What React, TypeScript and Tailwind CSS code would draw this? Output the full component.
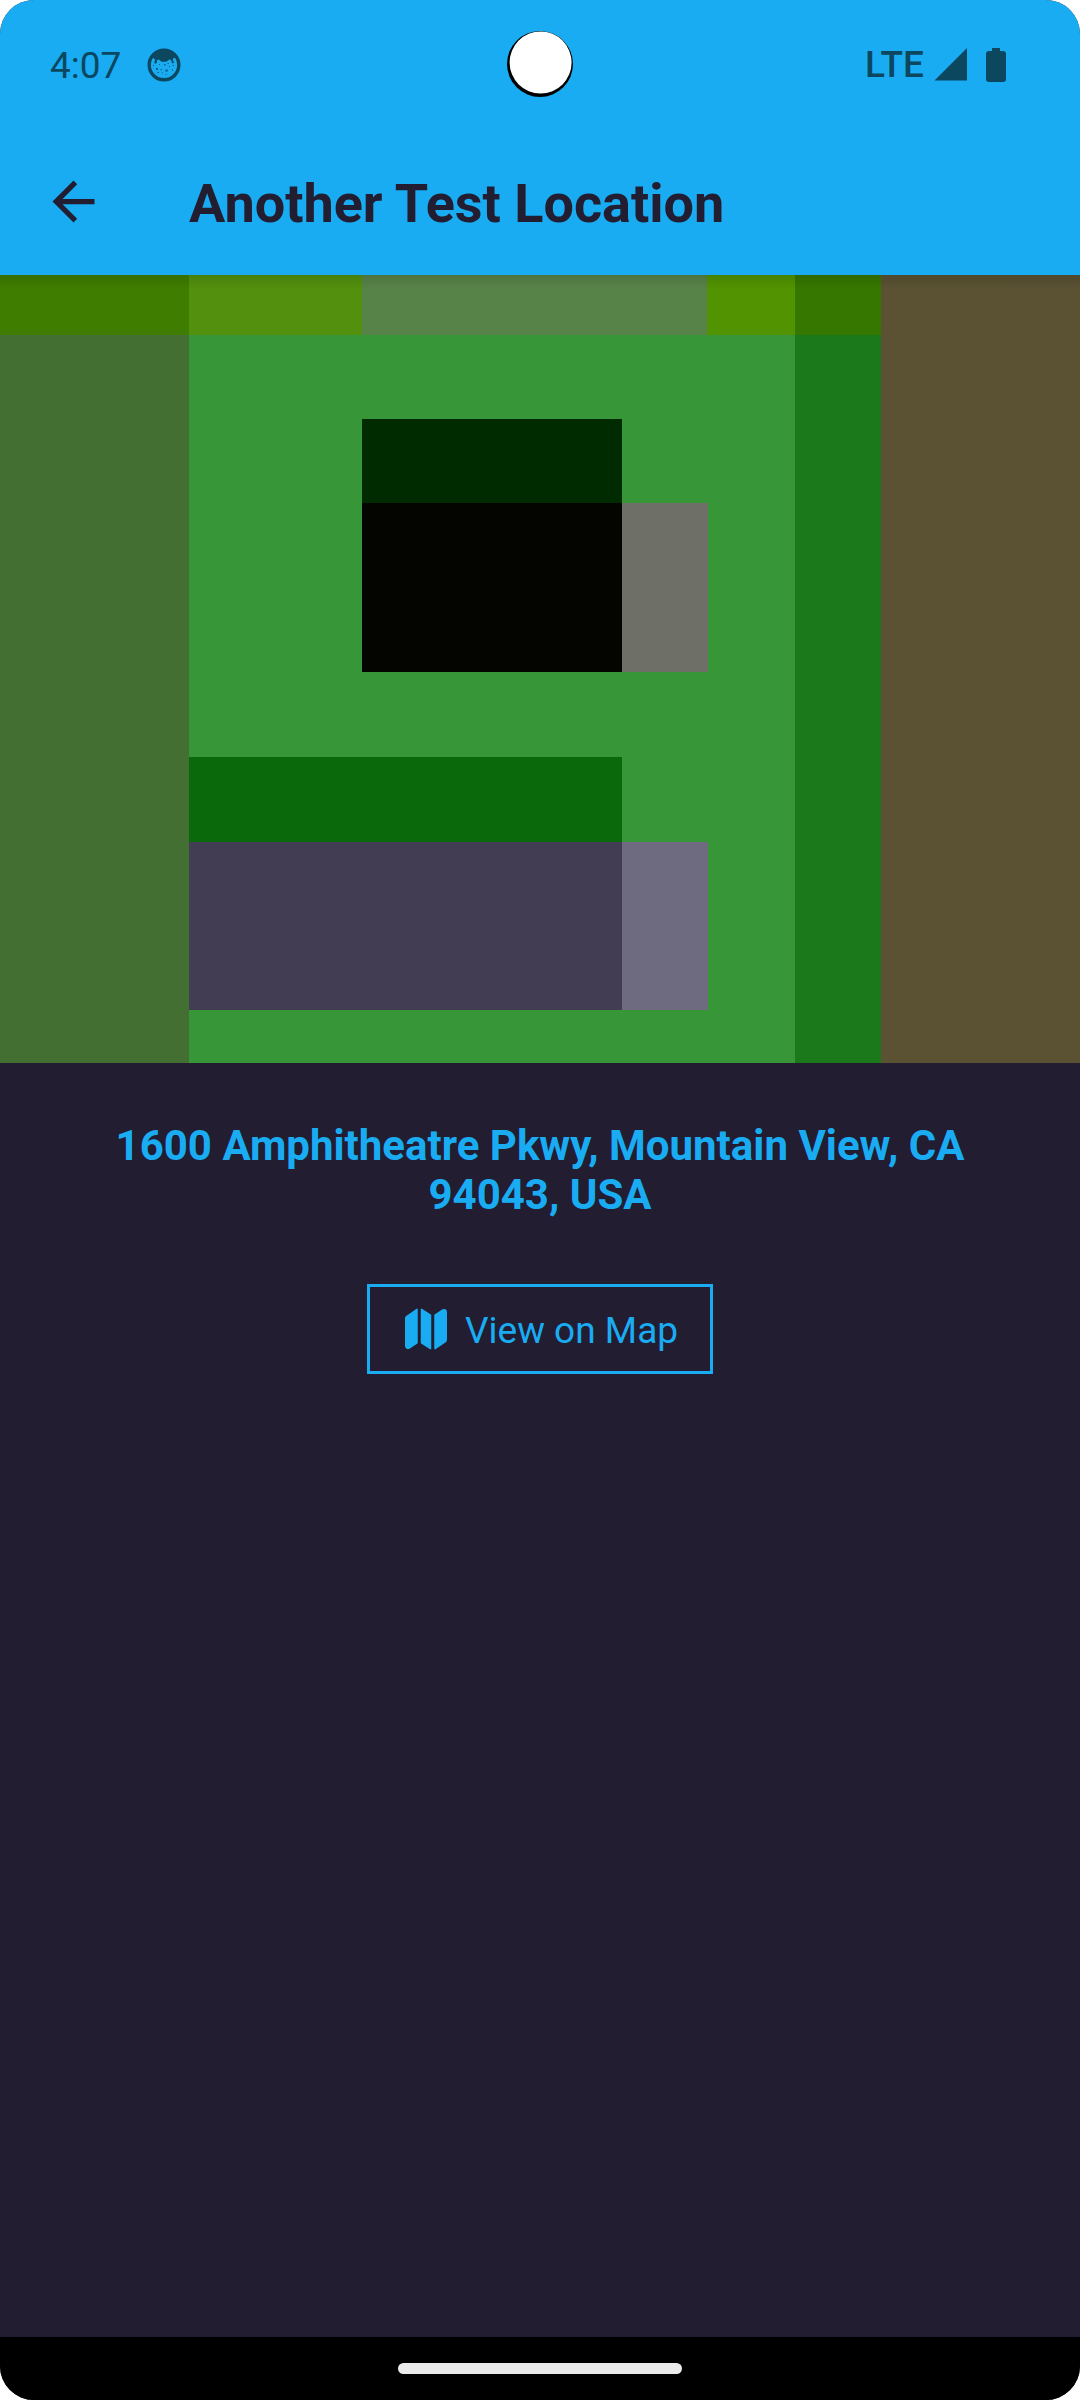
import React from 'react';
import { MdArrowBack } from 'react-icons/md';
import { IoMap } from 'react-icons/io5';

function CatIcon() {
  return (
    <svg viewBox="0 0 34 34" className="h-[34px] w-[34px]" aria-hidden="true">
      <circle cx="17" cy="17" r="14.8" fill="none" stroke="currentColor" strokeWidth="3.4" />
      <path
        fill="currentColor"
        d="M4.500 9C7 4.600 12 1.500 17 1.500s10 3.100 12.500 7.500L26 10.500l-.2 1.300 1.300 3-1.900.6-1.200-3.400-1.500-.5-2.500 1.800C18.500 14 15.500 14 14 13.300l-2.500-1.800-1.500.5-.2 3-1.900.8-.6-1.800 1-2.600Z"
      />
      <g fill="currentColor" opacity="0.75">
        <rect x="9" y="20" width="2" height="2" />
        <rect x="18.500" y="21.500" width="2.200" height="2.200" />
        <rect x="17" y="16" width="1.500" height="1.500" />
        <rect x="12" y="16" width="1" height="1" />
        <rect x="13.500" y="21" width="1.300" height="1.300" />
        <rect x="20.500" y="15" width="1.500" height="1" />
        <rect x="25.500" y="17" width="1.500" height="1" />
        <rect x="25" y="21" width="1" height="1.500" />
        <rect x="22" y="18" width="1" height="1" />
        <rect x="15" y="24.500" width="1" height="1" />
        <rect x="10.500" y="24" width="1.500" height="1" />
        <rect x="18.500" y="26" width="1" height="1" />
        <rect x="6" y="17" width="1" height="1" />
      </g>
    </svg>
  );
}

function StatusBar() {
  return (
    <div className="relative flex h-32 items-start justify-between pt-11 pr-[73px] pl-[50px] text-[#0b475f]">
      <div className="flex h-[42px] items-center gap-[26px]">
        <span className="pt-0.5 text-[37px] leading-[42px]">4:07</span>
        <CatIcon />
      </div>
      <svg viewBox="0 0 66 66" className="absolute top-[31px] left-1/2 h-[66px] w-[66px] -translate-x-1/2" aria-hidden="true">
        <circle cx="33" cy="33" r="33" fill="#000" />
        <circle cx="33.600" cy="31.500" r="31" fill="#fff" />
      </svg>
      <div className="flex h-[42px] items-center">
        <span className="text-[37px] leading-[42px] font-medium">LTE</span>
        <svg viewBox="0 0 34 34" className="ml-2.5 h-[34px] w-[34px]" aria-hidden="true">
          <path d="M0.500 32.500 33 0V32.500Z" fill="currentColor" />
        </svg>
        <svg viewBox="0 0 22 34" className="ml-[17px] h-[34px] w-[22px]" aria-hidden="true">
          <path d="M7 0h8v3h3q3 0 3 3v25q0 3-3 3H4q-3 0-3-3V6q0-3 3-3h3Z" fill="currentColor" />
        </svg>
      </div>
    </div>
  );
}

const tiles: [number, number, number, number, string][] = [
  [0, 0, 189, 60, '#3f7d00'],
  [189, 0, 173, 60, '#52900d'],
  [362, 0, 345, 60, '#588348'],
  [707, 0, 88, 60, '#519300'],
  [795, 0, 86, 60, '#367700'],
  [0, 60, 189, 728, '#436f32'],
  [189, 60, 606, 728, '#379637'],
  [795, 60, 86, 728, '#1b791b'],
  [881, 0, 199, 788, '#5a5233'],
  [362, 144, 260, 84, '#002b00'],
  [362, 228, 260, 169, '#050500'],
  [622, 228, 86, 169, '#6e6f67'],
  [189, 482, 433, 85, '#0a690a'],
  [189, 567, 433, 168, '#433d54'],
  [622, 567, 86, 168, '#6e6a80'],
];

function PlacePhoto() {
  return (
    <svg
      viewBox="0 0 1080 788"
      preserveAspectRatio="none"
      shapeRendering="crispEdges"
      className="block h-[788px] w-full"
      role="img"
      aria-label="Another Test Location"
    >
      <defs>
        <linearGradient id="shade" x1="0" y1="0" x2="0" y2="1">
          <stop offset="0" stopColor="#000" stopOpacity="0.12" />
          <stop offset="1" stopColor="#000" stopOpacity="0" />
        </linearGradient>
      </defs>
      {tiles.map(([x, y, w, h, fill]) => (
        <rect key={`${x}-${y}`} x={x} y={y} width={w} height={h} fill={fill} />
      ))}
      <rect width="1080" height="14" fill="url(#shade)" />
    </svg>
  );
}

export default function App() {
  return (
    <div className="min-h-screen bg-white font-['Roboto',sans-serif]">
      <div className="flex min-h-screen flex-col overflow-hidden rounded-[34px] bg-[#221d30]">
        <header className="bg-[#1aacf2]">
          <StatusBar />
          <div className="flex h-[147px] items-center pl-[42px] text-[#221d30]">
            <button type="button" aria-label="Go back" className="mr-21">
              <MdArrowBack className="h-[63px] w-[63px]" />
            </button>
            <h1 className="pt-1 text-[54px] leading-[62px] font-bold">Another Test Location</h1>
          </div>
        </header>
        <main className="flex flex-1 flex-col items-center">
          <PlacePhoto />
          <p className="mx-[53px] mt-[58px] text-center text-[42px] leading-[49px] font-bold text-[#1aacf2]">
            1600 Amphitheatre Pkwy, Mountain View, CA 94043, USA
          </p>
          <button
            type="button"
            className="mt-[65px] flex h-[90px] items-center gap-[15px] border-3 border-[#1aacf2] px-8 text-[37px] leading-[44px] text-[#1aacf2]"
          >
            <IoMap className="h-12 w-12" />
            <span className="pt-1">View on Map</span>
          </button>
        </main>
        <footer className="flex h-[63px] items-center justify-center bg-black">
          <div className="h-[11px] w-[284px] rounded-full bg-[#ebebeb]" />
        </footer>
      </div>
    </div>
  );
}
